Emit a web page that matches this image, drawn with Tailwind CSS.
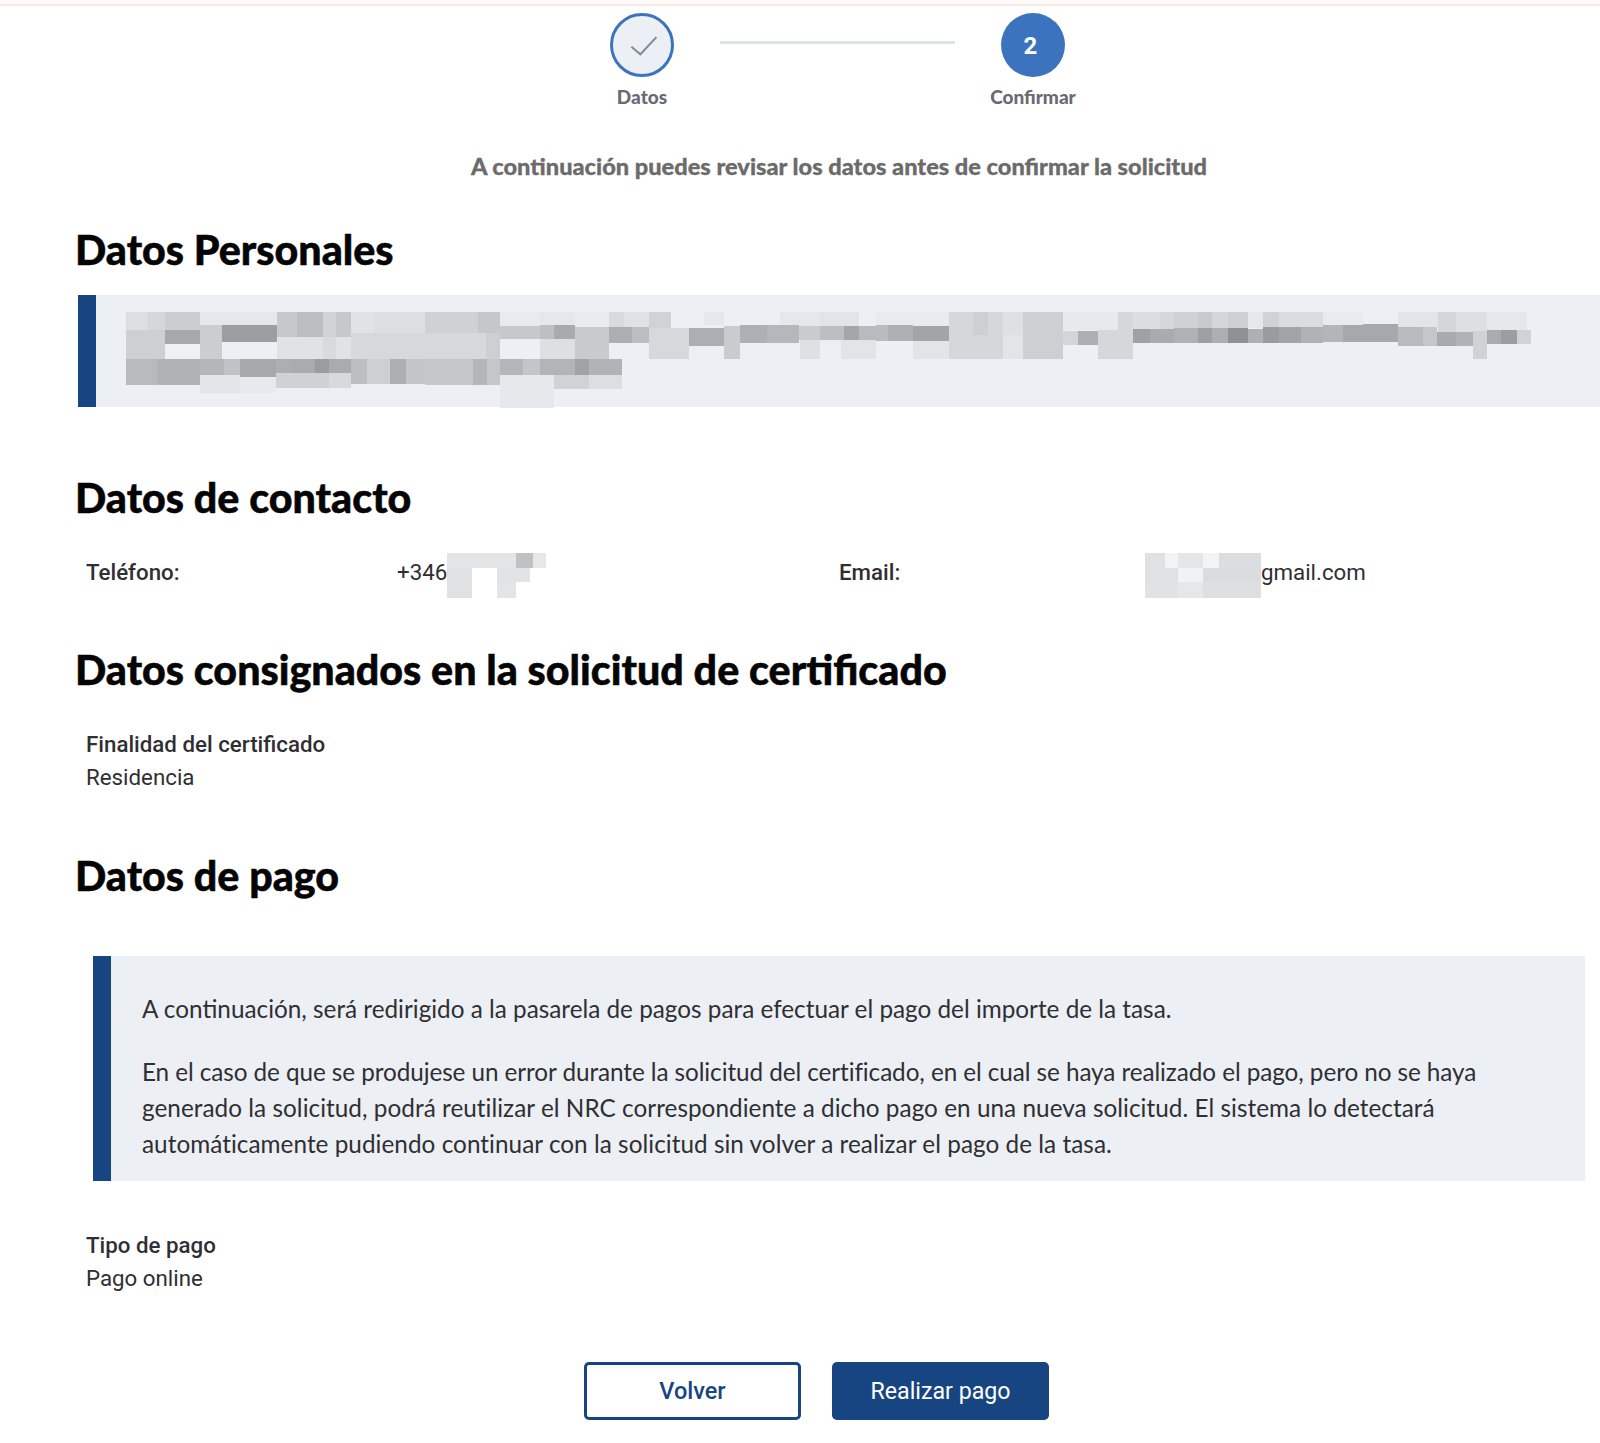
<!DOCTYPE html>
<html lang="es">

<head>
	<meta charset="UTF-8">
	<meta name="viewport" content="width=device-width, initial-scale=1.0">
	<script src="https://cdn.jsdelivr.net/npm/@tailwindcss/browser@4"></script>
	<title>Confirmar solicitud</title>
</head>

<body class="bg-white font-['Roboto',sans-serif] text-[#2f2f33]">
	<div class="h-[6px] bg-[#fffafa] border-b-2 border-[#fde8e2]"></div>

	<!-- Stepper -->
	<div class="flex items-start pl-[582px] pt-[7px]">
		<div class="flex w-[120px] flex-col items-center">
			<div class="flex h-16 w-16 items-center justify-center rounded-full border-[3px] border-[#3b73be] bg-[#eceff3]">
				<svg class="h-[30px] w-[30px]" viewBox="0 0 30 30" fill="none" stroke="#7f8ca3" stroke-width="2">
					<path d="M4.4 16.7 L13.4 24.3 L29.4 7.3" />
				</svg>
			</div>
			<span class="mt-2 text-center font-['Lato',sans-serif] text-[19px] font-black leading-6 text-[#696a73]">Datos</span>
		</div>
		<div class="ml-[18px] mt-[28px] h-[3px] w-[235px] bg-[#dfe4e8]"></div>
		<div class="ml-[18px] flex w-[120px] flex-col items-center">
			<div class="flex h-16 w-16 items-center justify-center rounded-full bg-[#3b73be] pr-[5px] pt-[1px] text-2xl font-bold text-white">2</div>
			<span class="mt-2 text-center font-['Lato',sans-serif] text-[19px] font-black leading-6 text-[#696a73]">Confirmar</span>
		</div>
	</div>

	<main class="pl-[78px]">
		<p class="mt-[42px] text-center font-['Lato',sans-serif] text-[23.6px] font-black leading-[30px] text-[#6b6b6b] [-webkit-text-stroke:0.3px_#6b6b6b]">A continuación puedes revisar los datos antes de confirmar la solicitud</p>

		<h1 class="-ml-[3px] mt-[44px] font-['Lato',sans-serif] text-[41.2px] font-black leading-[48px] text-[#050505] [-webkit-text-stroke:0.5px_#050505]">Datos Personales</h1>

		<!-- Pixelated personal data -->
		<div class="relative mt-[22px] h-[112px] border-l-[18px] border-[#174582] bg-[#eceff3]">
			<svg class="absolute -left-[36px] -top-[15px] h-[130px] w-[740px] blur-[0.5px]" viewBox="0 0 1450 390" preserveAspectRatio="none" shape-rendering="crispEdges">
				<rect x="130" y="95" width="40" height="55" fill="#dcdfe2"/><rect x="170" y="95" width="35" height="55" fill="#d5d8db"/><rect x="205" y="95" width="70" height="55" fill="#cbced1"/><rect x="275" y="95" width="150" height="40" fill="#e5e8eb"/>
				<rect x="425" y="95" width="40" height="77" fill="#c6c9cc"/><rect x="465" y="95" width="50" height="77" fill="#bbbdc0"/><rect x="515" y="95" width="25" height="77" fill="#d0d3d6"/><rect x="540" y="95" width="30" height="77" fill="#c5c9cb"/>
				<rect x="570" y="95" width="45" height="63" fill="#e0e3e6"/><rect x="615" y="95" width="100" height="63" fill="#dcdfe2"/><rect x="715" y="95" width="105" height="63" fill="#cfd2d5"/><rect x="820" y="95" width="42" height="63" fill="#c5c8cb"/>
				<rect x="862" y="95" width="78" height="43" fill="#e8ebee"/><rect x="940" y="95" width="70" height="40" fill="#e5e8eb"/><rect x="1010" y="95" width="65" height="45" fill="#e9ecee"/><rect x="1075" y="95" width="30" height="45" fill="#d8dbde"/><rect x="1105" y="95" width="50" height="45" fill="#dfe2e4"/><rect x="1155" y="95" width="42" height="50" fill="#d0d3d6"/>
				<rect x="1262" y="95" width="40" height="40" fill="#e5e8eb"/><rect x="1410" y="95" width="40" height="40" fill="#e5e8eb"/>

				<rect x="130" y="150" width="75" height="88" fill="#cdd0d2"/><rect x="205" y="150" width="70" height="42" fill="#a6a8ab"/><rect x="205" y="192" width="70" height="46" fill="#eef0f3"/><rect x="275" y="135" width="43" height="103" fill="#cbced1"/><rect x="318" y="135" width="107" height="50" fill="#9c9ea1"/>
				<rect x="425" y="172" width="145" height="66" fill="#e0e3e6"/><rect x="515" y="172" width="25" height="66" fill="#d8dbde"/><rect x="570" y="158" width="265" height="80" fill="#d6d9dc"/><rect x="835" y="158" width="27" height="80" fill="#cdd0d3"/>
				<rect x="862" y="138" width="78" height="40" fill="#c6c9cc"/><rect x="940" y="135" width="28" height="43" fill="#bdbfc2"/><rect x="968" y="135" width="42" height="43" fill="#a8aaad"/><rect x="1010" y="140" width="65" height="98" fill="#c8cbce"/><rect x="940" y="178" width="70" height="60" fill="#dde0e3"/>
				<rect x="1075" y="140" width="45" height="48" fill="#acaeb1"/><rect x="1120" y="140" width="35" height="48" fill="#bbbec1"/><rect x="1155" y="145" width="78" height="93" fill="#d6d9dc"/><rect x="1233" y="145" width="69" height="53" fill="#acaeb1"/><rect x="1302" y="138" width="31" height="100" fill="#c9ccce"/><rect x="1333" y="135" width="52" height="55" fill="#aeb0b3"/><rect x="1385" y="135" width="63" height="55" fill="#b5b7ba"/><rect x="1448" y="138" width="2" height="42" fill="#cbced0"/>

				<rect x="130" y="238" width="60" height="77" fill="#b8babd"/><rect x="190" y="238" width="85" height="77" fill="#b0b2b5"/><rect x="275" y="238" width="47" height="47" fill="#b4b6b9"/><rect x="322" y="238" width="30" height="47" fill="#c0c2c5"/><rect x="352" y="238" width="71" height="52" fill="#a6a8aa"/><rect x="275" y="285" width="77" height="53" fill="#e2e5e7"/><rect x="352" y="290" width="71" height="48" fill="#e7eaec"/>
				<rect x="423" y="238" width="30" height="42" fill="#acaeb1"/><rect x="453" y="238" width="47" height="42" fill="#a9abae"/><rect x="500" y="238" width="27" height="42" fill="#9a9c9f"/><rect x="527" y="238" width="43" height="42" fill="#a9abae"/><rect x="423" y="280" width="104" height="45" fill="#cfd2d4"/><rect x="527" y="280" width="43" height="45" fill="#d7dadc"/>
				<rect x="570" y="238" width="32" height="74" fill="#bcbec1"/><rect x="602" y="238" width="45" height="74" fill="#cdd0d2"/><rect x="647" y="238" width="31" height="74" fill="#adafb2"/><rect x="678" y="238" width="37" height="74" fill="#c3c5c8"/><rect x="715" y="238" width="95" height="78" fill="#c5c8ca"/><rect x="810" y="238" width="26" height="78" fill="#b3b6b8"/><rect x="836" y="238" width="26" height="78" fill="#c4c7c9"/>
				<rect x="862" y="238" width="46" height="47" fill="#b4b6b9"/><rect x="908" y="238" width="32" height="47" fill="#c3c5c8"/><rect x="940" y="238" width="70" height="46" fill="#b2b4b7"/><rect x="1010" y="238" width="27" height="46" fill="#a0a2a5"/><rect x="1037" y="238" width="64" height="46" fill="#b1b3b6"/>
				<rect x="862" y="285" width="106" height="99" fill="#e6e9eb"/><rect x="968" y="284" width="69" height="43" fill="#d0d3d5"/><rect x="1037" y="284" width="64" height="43" fill="#dcdfe1"/>
			</svg>
			<svg class="absolute left-[704px] -top-[15px] h-[130px] w-[800px] blur-[0.5px]" viewBox="0 0 1568 390" preserveAspectRatio="none" shape-rendering="crispEdges">
				<rect x="0" y="95" width="40" height="43" fill="#e5e8eb"/><rect x="40" y="95" width="75" height="43" fill="#e2e5e8"/><rect x="148" y="95" width="144" height="43" fill="#e8ebee"/>
				<rect x="292" y="95" width="106" height="143" fill="#d5d8db"/><rect x="340" y="95" width="28" height="70" fill="#ccd0d2"/><rect x="398" y="95" width="40" height="70" fill="#dee1e3"/><rect x="398" y="165" width="40" height="73" fill="#e2e5e7"/><rect x="438" y="95" width="77" height="143" fill="#cdd0d3"/>
				<rect x="515" y="95" width="108" height="55" fill="#e7eaed"/><rect x="623" y="95" width="30" height="55" fill="#d5d8db"/><rect x="653" y="95" width="52" height="55" fill="#dbdee1"/><rect x="705" y="95" width="28" height="55" fill="#d5d8db"/><rect x="733" y="95" width="47" height="50" fill="#cfd2d5"/><rect x="780" y="95" width="28" height="50" fill="#c8cbce"/><rect x="808" y="95" width="30" height="50" fill="#d4d7da"/><rect x="838" y="95" width="40" height="50" fill="#cdd0d3"/><rect x="878" y="95" width="30" height="50" fill="#e5e8ea"/><rect x="908" y="95" width="30" height="50" fill="#d0d3d6"/><rect x="938" y="95" width="87" height="50" fill="#dadde0"/><rect x="1025" y="95" width="78" height="40" fill="#e8ebed"/><rect x="1172" y="95" width="78" height="45" fill="#e2e5e8"/><rect x="1250" y="95" width="35" height="60" fill="#d3d6d8"/><rect x="1285" y="95" width="62" height="60" fill="#dde0e3"/><rect x="1347" y="95" width="78" height="55" fill="#e5e8ea"/>

				<rect x="0" y="138" width="40" height="42" fill="#c9ccce"/><rect x="40" y="138" width="46" height="42" fill="#bcbfc1"/><rect x="86" y="138" width="29" height="42" fill="#a4a6a9"/><rect x="115" y="138" width="33" height="42" fill="#b8babd"/><rect x="148" y="135" width="24" height="47" fill="#b9bcbe"/><rect x="172" y="135" width="50" height="47" fill="#aeb0b3"/><rect x="222" y="138" width="70" height="44" fill="#a2a4a7"/>
				<rect x="0" y="180" width="40" height="58" fill="#dee1e4"/><rect x="80" y="180" width="68" height="58" fill="#e2e5e8"/><rect x="222" y="182" width="70" height="56" fill="#e2e5e8"/>
				<rect x="515" y="153" width="30" height="42" fill="#d3d6d8"/><rect x="545" y="153" width="40" height="42" fill="#adafb2"/><rect x="585" y="150" width="68" height="88" fill="#d5d8da"/><rect x="653" y="148" width="33" height="40" fill="#9fa1a4"/><rect x="686" y="148" width="47" height="40" fill="#a9abae"/><rect x="733" y="145" width="47" height="43" fill="#afb1b4"/><rect x="780" y="145" width="28" height="43" fill="#9d9fa2"/><rect x="808" y="145" width="30" height="43" fill="#acaeb1"/><rect x="838" y="145" width="40" height="43" fill="#8f9194"/><rect x="878" y="148" width="30" height="42" fill="#aeb0b3"/><rect x="908" y="142" width="30" height="48" fill="#999b9e"/><rect x="938" y="142" width="43" height="48" fill="#a2a4a7"/><rect x="981" y="142" width="44" height="48" fill="#b0b2b5"/>
				<rect x="1025" y="135" width="40" height="50" fill="#b3b5b8"/><rect x="1065" y="135" width="38" height="50" fill="#a6a8ab"/><rect x="1103" y="133" width="69" height="52" fill="#a6a8ab"/><rect x="1172" y="140" width="50" height="57" fill="#b8bbbd"/><rect x="1222" y="140" width="27" height="57" fill="#c4c7c9"/><rect x="1249" y="155" width="36" height="42" fill="#a8aaad"/><rect x="1285" y="155" width="34" height="42" fill="#b0b2b5"/><rect x="1319" y="152" width="28" height="86" fill="#d0d3d6"/><rect x="1347" y="150" width="26" height="43" fill="#a9abae"/><rect x="1373" y="150" width="33" height="43" fill="#9b9da0"/><rect x="1406" y="150" width="26" height="43" fill="#d0d3d5"/>
			</svg>
		</div>

		<h1 class="-ml-[3px] mt-[66px] font-['Lato',sans-serif] text-[41.2px] font-black leading-[48px] text-[#050505] [-webkit-text-stroke:0.5px_#050505]">Datos de contacto</h1>

		<div class="mt-[36px] grid h-[30px] grid-cols-[753px_1fr] pl-[8px] text-[22.3px] leading-[30px]">
			<div class="flex">
				<span class="w-[311px] font-medium">Teléfono:</span>
				<span>+346</span>
				<svg class="-mt-[4px] h-[45px] w-[99px]" viewBox="1014 70 258 133" preserveAspectRatio="none" shape-rendering="crispEdges">
					<rect x="1014" y="70" width="179" height="43" fill="#e3e4e6"/><rect x="1193" y="70" width="44" height="43" fill="#c0c1c3"/><rect x="1237" y="70" width="35" height="43" fill="#e6e7e8"/>
					<rect x="1014" y="113" width="66" height="90" fill="#e0e1e3"/><rect x="1145" y="113" width="85" height="44" fill="#e2e3e5"/><rect x="1145" y="157" width="48" height="46" fill="#e3e4e6"/>
				</svg>
			</div>
			<div class="flex">
				<span class="w-[306px] font-medium">Email:</span>
				<svg class="relative z-10 -mt-[4px] h-[45px] w-[116px] shrink-0" viewBox="903 70 302 133" preserveAspectRatio="none" shape-rendering="crispEdges">
					<rect x="903" y="70" width="51" height="43" fill="#e0e1e3"/><rect x="954" y="70" width="36" height="43" fill="#f2f3f4"/><rect x="990" y="70" width="64" height="43" fill="#e5e6e7"/><rect x="1054" y="70" width="41" height="43" fill="#f2f3f4"/><rect x="1095" y="70" width="110" height="43" fill="#dcdde0"/>
					<rect x="903" y="113" width="87" height="44" fill="#e0e1e3"/><rect x="990" y="113" width="64" height="44" fill="#f1f2f3"/><rect x="1054" y="113" width="151" height="44" fill="#dbdcde"/>
					<rect x="903" y="157" width="87" height="46" fill="#e1e2e4"/><rect x="990" y="157" width="64" height="46" fill="#e6e7e8"/><rect x="1054" y="157" width="151" height="46" fill="#dedfe1"/>
				</svg>
				<span>gmail.com</span>
			</div>
		</div>

		<h1 class="-ml-[3px] mt-[58px] font-['Lato',sans-serif] text-[41.2px] font-black leading-[48px] text-[#050505] [-webkit-text-stroke:0.5px_#050505]">Datos consignados en la solicitud de certificado</h1>

		<div class="ml-[8px] mt-[35px] text-[22.3px] leading-[33px]">
			<div class="font-medium">Finalidad del certificado</div>
			<div>Residencia</div>
		</div>

		<h1 class="-ml-[3px] mt-[57px] font-['Lato',sans-serif] text-[41.2px] font-black leading-[48px] text-[#050505] [-webkit-text-stroke:0.5px_#050505]">Datos de pago</h1>

		<div class="ml-[15px] mr-[15px] mt-[57px] h-[225px] border-l-[18px] border-[#174582] bg-[#eceff3] pl-[31px] pr-[40px] pt-[35px] font-['Lato',sans-serif] text-[24.3px] leading-[36px] text-[#2f2f33]">
			<p>A continuación, será redirigido a la pasarela de pagos para efectuar el pago del importe de la tasa.</p>
			<p class="mt-[27px]"><span class="tracking-[-0.08px]">En el caso de que se produjese un error durante la solicitud del certificado, en el cual se haya realizado el pago, pero no se haya</span> <span class="tracking-[0.04px]">generado la solicitud, podrá reutilizar el NRC correspondiente a dicho pago en una nueva solicitud. El sistema lo detectará automáticamente pudiendo continuar con la solicitud sin volver a realizar el pago de la tasa.</span></p>
		</div>

		<div class="ml-[8px] mt-[48px] text-[22.3px] leading-[33px]">
			<div class="font-medium">Tipo de pago</div>
			<div>Pago online</div>
		</div>
	</main>

	<div class="mt-[67px] flex gap-[31px] pl-[584px]">
		<button class="h-[58px] w-[217px] rounded-[5px] border-[3px] border-[#174582] bg-white pt-[2px] text-[23.5px] font-medium text-[#174582]">Volver</button>
		<button class="h-[58px] w-[217px] rounded-[5px] bg-[#174582] pt-[1px] text-[23.2px] text-white">Realizar pago</button>
	</div>
</body>

</html>
